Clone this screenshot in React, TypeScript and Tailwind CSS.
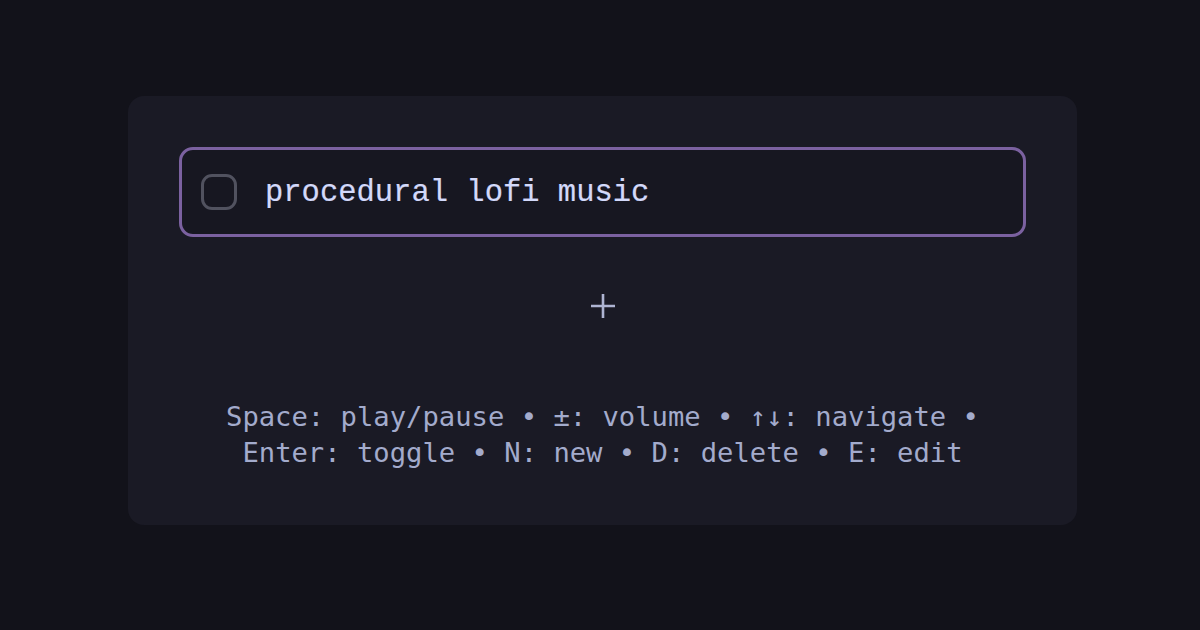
export default function App() {
  return (
    <div className="w-[1200px] h-[630px] bg-[#12121a] pt-[96px] pl-[128px] overflow-hidden">
      <div className="w-[949px] h-[429px] bg-[#1a1a25] rounded-[16px] px-[51px] pt-[51px]">
        <div className="h-[90px] border-[3px] border-[#7b61a0] rounded-[14px] bg-[#171721] flex items-center pl-[19px] gap-[28px]">
          <div className="w-[36px] h-[36px] border-[3px] border-[#51525f] rounded-[11px] shrink-0" />
          <span className="pt-[3px] text-[30.5px] text-[#d3d9fa] font-['Liberation_Mono',monospace] leading-none [-webkit-text-stroke:0.2px_#d3d9fa]">
            procedural lofi music
          </span>
        </div>
        <div className="flex justify-center mt-[56px]">
          <svg width="26" height="26" viewBox="0 0 26 26" fill="none" stroke="#aeb4d2" strokeWidth="2.6">
            <path d="M13 1v24M1 13h24" />
          </svg>
        </div>
        <p className="mt-[80px] text-center text-[27.2px] leading-[36px] text-[#a3abcc] font-['DejaVu_Sans_Mono',monospace]">
          Space: play/pause • ±: volume • ↑↓: navigate •
          <br />
          Enter: toggle • N: new • D: delete • E: edit
        </p>
      </div>
    </div>
  );
}
